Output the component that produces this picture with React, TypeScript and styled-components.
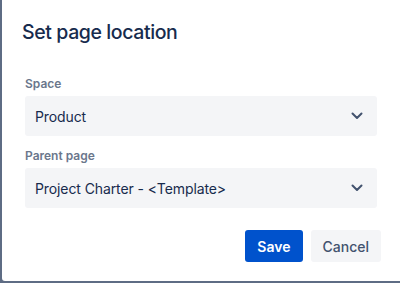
import React from "react";
import styled, { createGlobalStyle } from "styled-components";

const Global = createGlobalStyle`
  html, body { margin: 0; padding: 0; }
  body {
    background: #5e6c84;
    font-family: Inter, "Noto Sans", "Liberation Sans", sans-serif;
    width: 400px;
    height: 283px;
    overflow: hidden;
  }
`;

const Modal = styled.div`
  margin-left: 2px;
  width: 398px;
  height: 281px;
  background: #ffffff;
  border-bottom-left-radius: 3px;
  box-sizing: border-box;
  display: flex;
  flex-direction: column;
`;

const Header = styled.div`
  padding: 20px 20px 0 20px;
`;

const Title = styled.h1`
  margin: 0;
  font-size: 19.5px;
  font-weight: 500;
  color: #172b4d;
  line-height: 24px;
  letter-spacing: -0.4px;
`;

const Body = styled.div`
  margin-top: 32px;
  padding: 0 23px 0 23px;
  display: flex;
  flex-direction: column;
`;

const Field = styled.div<{ $gap?: number }>`
  display: flex;
  flex-direction: column;
  margin-top: ${(p) => p.$gap ?? 0}px;
`;

const Label = styled.label`
  font-size: 12px;
  font-weight: 600;
  color: #6b778c;
  line-height: 16px;
  margin-bottom: 4px;
`;

const Select = styled.div`
  height: 40px;
  background: #f4f5f7;
  border-radius: 3px;
  display: flex;
  align-items: center;
  justify-content: space-between;
  padding: 0 14px 0 10px;
  box-sizing: border-box;
  font-size: 14px;
  letter-spacing: -0.1px;
  color: #172b4d;
`;

const Footer = styled.div`
  margin-top: 22px;
  display: flex;
  justify-content: flex-end;
  gap: 8px;
  padding-right: 19px;
`;

const Button = styled.button<{ $primary?: boolean }>`
  height: 32px;
  border: none;
  border-radius: 3px;
  padding: 0 12px;
  font-family: inherit;
  font-size: 14px;
  font-weight: ${(p) => (p.$primary ? 600 : 500)};
  background: ${(p) => (p.$primary ? "#0052cc" : "#f4f5f7")};
  color: ${(p) => (p.$primary ? "#ffffff" : "#42526e")};
  cursor: pointer;
`;

const Chevron = () => (
  <svg width="12" height="8" viewBox="0 0 12 8">
    <path d="M1.5 1.5 L6 6 L10.5 1.5" fill="none" stroke="#42526e" strokeWidth="2" strokeLinecap="round" strokeLinejoin="round" />
  </svg>
);

export default function App() {
  return (
    <>
      <Global />
      <Modal>
        <Header>
          <Title>Set page location</Title>
        </Header>
        <Body>
          <Field>
            <Label>Space</Label>
            <Select>
              <span>Product</span>
              <Chevron />
            </Select>
          </Field>
          <Field $gap={12}>
            <Label>Parent page</Label>
            <Select>
              <span>Project Charter - &lt;Template&gt;</span>
              <Chevron />
            </Select>
          </Field>
        </Body>
        <Footer>
          <Button $primary>Save</Button>
          <Button>Cancel</Button>
        </Footer>
      </Modal>
    </>
  );
}
